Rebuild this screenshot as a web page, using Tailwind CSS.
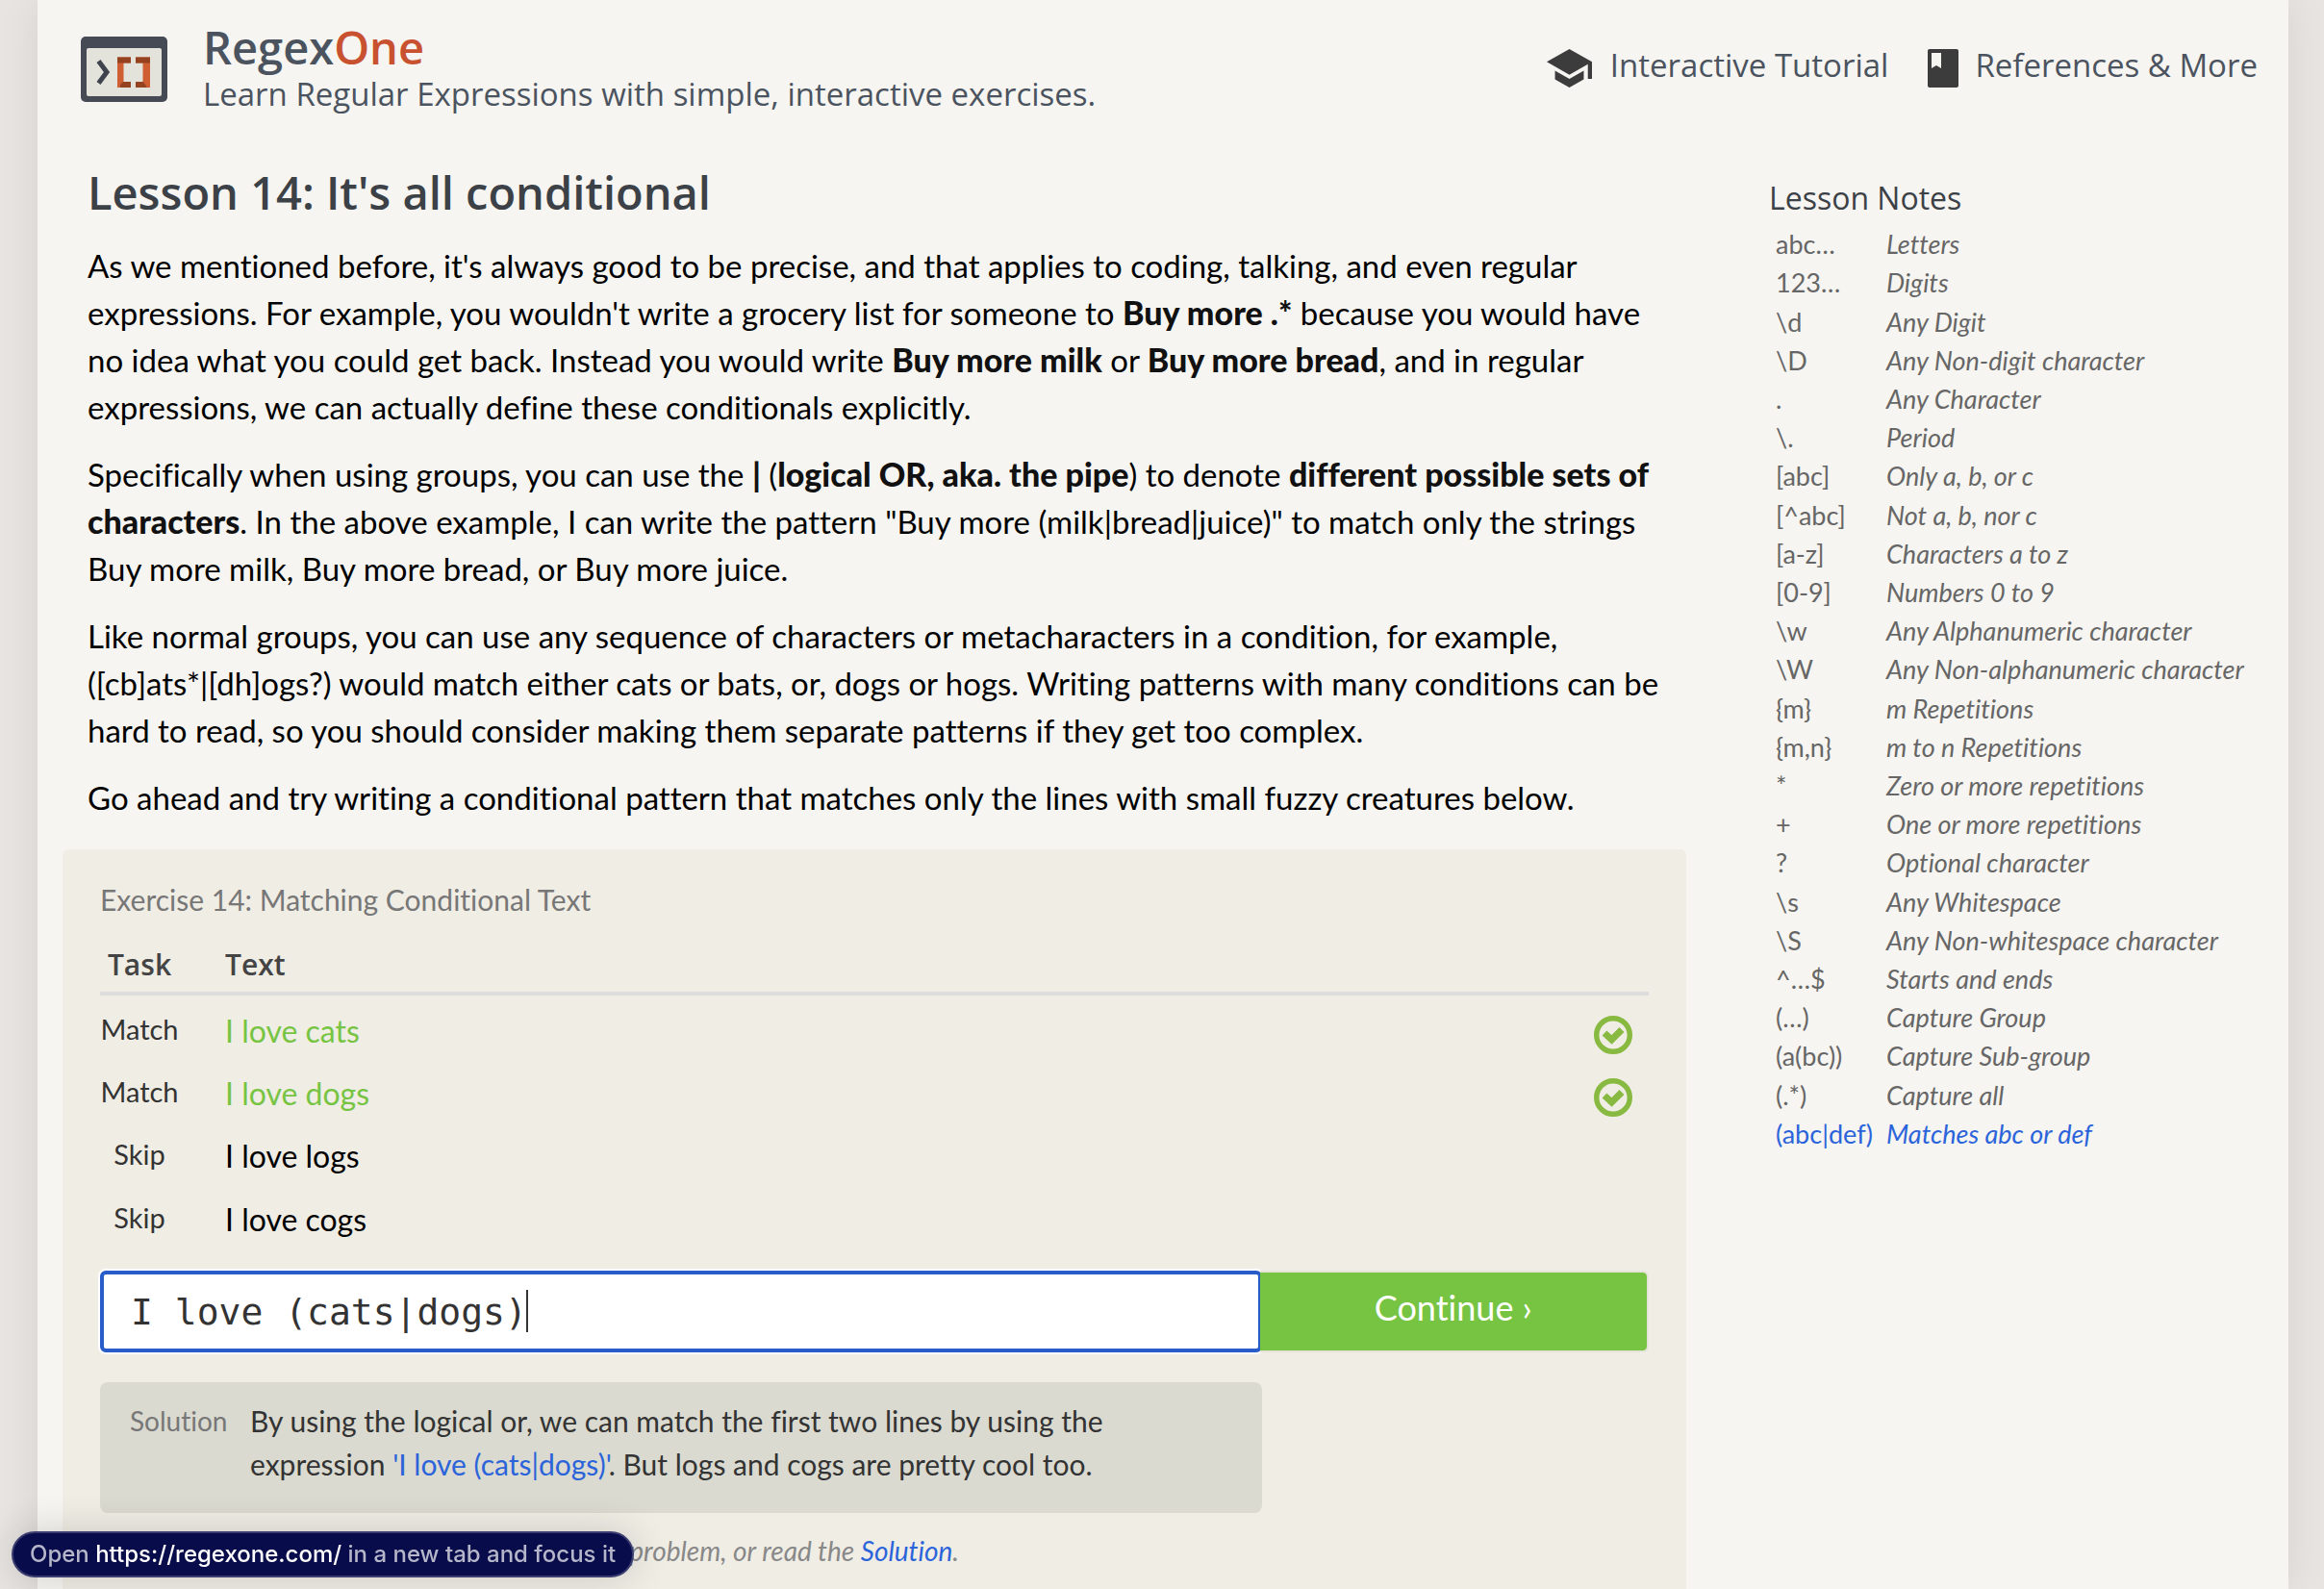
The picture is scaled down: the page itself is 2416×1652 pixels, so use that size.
<!DOCTYPE html>
<html lang="en">
<head>
<meta charset="utf-8">
<title>RegexOne - Lesson 14: It's all conditional</title>
<script src="https://cdn.jsdelivr.net/npm/@tailwindcss/browser@4"></script>
</head>
<body class="bg-[#e8e4e1] pl-[39px] pr-[37px] font-['Lato',sans-serif] text-black overflow-hidden [font-variant-ligatures:no-common-ligatures]">
<div class="flex min-h-screen flex-col bg-[#f6f5f1] pl-[26px] shadow-[0_0_40px_rgba(0,0,0,0.08)]">

  <header class="flex items-start pt-[27px] font-['Open_Sans',sans-serif] text-[#4b535f]">
    <svg class="ml-[19px] mt-[11px] h-[68px] w-[90px] shrink-0" viewBox="0 0 90 68" aria-hidden="true">
      <rect width="90" height="68" rx="5" fill="#454a55"/>
      <rect x="6" y="12" width="78" height="50" rx="2" fill="#e3e3db"/>
      <path d="M18.500 25.500L27 37L18.500 48.500" fill="none" stroke="#3e434e" stroke-width="5"/>
      <path d="M38 21.500H52V27.500H44.500V47H52V53H38Z" fill="#cf5f33"/>
      <path d="M72 21.500H57V27.500H64.500V47H57V53H72Z" fill="#cf5f33"/>
      <path d="M38 21.500H52V27.500H38ZM57 21.500H72V27.500H57ZM44 47H52V53H41V50ZM57 47H65L69 53H57Z" fill="#94421f"/>
    </svg>
    <div class="ml-[37px] flex-1">
      <a href="#" class="block text-[47px] leading-[45px] font-semibold">Regex<span class="text-[#c85130]">One</span></a>
      <p class="text-[33px] leading-[52px]">Learn Regular Expressions with simple, interactive exercises.</p>
    </div>
    <nav class="mt-4 mr-8 flex gap-[41px] text-[33px] leading-[50px]">
      <a href="#" class="flex gap-[19px]">
        <svg class="mt-2 h-10 w-[47px]" viewBox="1 3 22 18" preserveAspectRatio="none" fill="#3c3c3c" aria-hidden="true"><path d="M5 13.180v4L12 21l7-3.820v-4L12 17l-7-3.820zM12 3L1 9l11 6 9-4.910V17h2V9L12 3z"/></svg>
        Interactive Tutorial
      </a>
      <a href="#" class="flex gap-[17px]">
        <svg class="mt-2 h-10 w-8" viewBox="4 2 16 20" fill="#3c3c3c" aria-hidden="true"><path d="M19 2H5c-.6 0-1 .4-1 1v18c0 .6.400 1 1 1h14c.6 0 1-.4 1-1V3c0-.6-.4-1-1-1zM6 4h5v8l-2.500-1.500L6 12V4z"/></svg>
        References &amp; More
      </a>
    </nav>
  </header>

  <div class="grid flex-1 grid-cols-[minmax(0,1fr)_540px] gap-x-[86px] pt-11">
    <main class="flex flex-col">
      <article class="pl-[26px] text-[33px] leading-[49px]">
        <h1 class="mb-5 font-['Open_Sans',sans-serif] text-[47px] leading-[64px] font-semibold text-[#3c4147]">Lesson 14: It's all conditional</h1>
        <div class="flex flex-col gap-[21px]">
          <p>As we mentioned before, it's always good to be precise, and that applies to coding, talking, and even regular<br>expressions. For example, you wouldn't write a grocery list for someone to <strong class="text-[34px] leading-10 font-black text-[#111]">Buy more .*</strong> because you would have<br>no idea what you could get back. Instead you would write <strong class="text-[34px] leading-10 font-black text-[#111]">Buy more milk</strong> or <strong class="text-[34px] leading-10 font-black text-[#111]">Buy more bread</strong>, and in regular<br>expressions, we can actually define these conditionals explicitly.</p>
          <p>Specifically when using groups, you can use the <strong class="text-[34px] leading-10 font-black text-[#111]">|</strong> (<strong class="text-[34px] leading-10 font-black text-[#111]">logical OR, aka. the pipe</strong>) to denote <strong class="text-[34px] leading-10 font-black text-[#111]">different possible sets of<br>characters</strong>. In the above example, I can write the pattern "Buy more (milk|bread|juice)" to match only the strings<br>Buy more milk, Buy more bread, or Buy more juice.</p>
          <p>Like normal groups, you can use any sequence of characters or metacharacters in a condition, for example,<br>([cb]ats*|[dh]ogs?) would match either cats or bats, or, dogs or hogs. Writing patterns with many conditions can be<br>hard to read, so you should consider making them separate patterns if they get too complex.</p>
          <p>Go ahead and try writing a conditional pattern that matches only the lines with small fuzzy creatures below.</p>
        </div>
      </article>

      <section class="mt-[29px] flex-1 rounded-t-md bg-[#f0ede5] px-[39px] pt-[30px]">
        <h2 class="text-[30px] leading-[45px] text-[#777]">Exercise 14: Matching Conditional Text</h2>
        <table class="w-full border-collapse">
          <thead class="border-b-4 border-[#dcdcdc] font-['Open_Sans',sans-serif] text-[30px] leading-10 text-[#444]">
            <tr>
              <th class="w-[130px] pt-[25px] pr-12 pb-2 text-center font-semibold">Task</th>
              <th class="pt-[25px] pb-2 text-left font-semibold">Text</th>
              <th class="w-[57px]"></th>
            </tr>
          </thead>
          <tbody class="align-top leading-[57px]">
            <tr class="h-[65px]">
              <td class="pt-1.5 pr-12 text-center text-[29px] text-[#333]">Match</td>
              <td class="pt-2 text-[32px] text-[#77c443]">I love cats</td>
              <td class="pt-[21px]"><svg class="size-10" viewBox="0 0 40 40" fill="none" stroke="#88b940" role="img" aria-label="Matched"><circle cx="20" cy="20" r="17.300" stroke-width="5.400"/><path d="M11 18L18.500 25L29 14.500" stroke-width="7"/></svg></td>
            </tr>
            <tr class="h-[65px]">
              <td class="pt-1.5 pr-12 text-center text-[29px] text-[#333]">Match</td>
              <td class="pt-2 text-[32px] text-[#77c443]">I love dogs</td>
              <td class="pt-[21px]"><svg class="size-10" viewBox="0 0 40 40" fill="none" stroke="#88b940" role="img" aria-label="Matched"><circle cx="20" cy="20" r="17.300" stroke-width="5.400"/><path d="M11 18L18.500 25L29 14.500" stroke-width="7"/></svg></td>
            </tr>
            <tr class="h-[66px]">
              <td class="pt-1.5 pr-12 text-center text-[29px] text-[#333]">Skip</td>
              <td class="pt-2 text-[32px]">I love logs</td>
              <td></td>
            </tr>
            <tr class="h-[65px]">
              <td class="pt-1.5 pr-12 text-center text-[29px] text-[#333]">Skip</td>
              <td class="pt-2 text-[32px]">I love cogs</td>
              <td></td>
            </tr>
          </tbody>
        </table>

        <form class="mt-[25px] flex h-[85px]">
          <div class="relative w-3/4 shrink-0">
            <input type="text" aria-label="Your pattern" value="I love (cats|dogs)" class="h-full w-full rounded-md border-4 border-[#285dc9] bg-white pl-7 font-['DejaVu_Sans_Mono',monospace] text-[38px] text-[#333] shadow-[0_0_0_2px_#fff] outline-none">
            <span class="absolute top-5 left-[443px] h-11 w-0.5 bg-[#333]"></span>
          </div>
          <button type="button" class="relative -ml-0.5 flex-1 rounded-r-md border-2 border-l-0 border-[#e6e3db] bg-[#77c443] bg-clip-padding pb-[10px] text-[36px] text-white">Continue ›</button>
        </form>

        <div class="mt-[31px] flex w-3/4 rounded-lg bg-[#dadad0] pt-[18px] pb-7 pl-[31px] text-[30px] leading-[45px] text-[#333]">
          <span class="w-[125px] shrink-0 text-[28px] text-[#777]">Solution</span>
          <p>By using the logical or, we can match the first two lines by using the<br>expression <span class="text-[#2b64da]">'I love (cats|dogs)'</span>. But logs and cogs are pretty cool too.</p>
        </div>
        <p class="mt-[18px] text-[28px] leading-[42px] text-[#888] italic">Solve the above task to continue on to the next problem, or read the <a href="#" class="text-[#2b64da]">Solution</a>.</p>
      </section>
    </main>

    <aside class="pt-[14px] text-[#666]">
      <h2 class="mb-1 font-['Open_Sans',sans-serif] text-[32px] leading-[48px] text-[#3c4147]">Lesson Notes</h2>
      <table class="ml-[7px] h-[965px] text-left text-[27px] leading-10">
        <tbody id="notes"></tbody>
      </table>
    </aside>
  </div>
</div>

<div class="fixed bottom-3 left-3 h-12 rounded-full border-2 border-[#3b3d70] bg-[#090c4b] px-[17px] font-['Inter',sans-serif] text-2xl leading-[44px] font-medium whitespace-nowrap text-[#b5b6c9] shadow-[0_0_40px_rgba(0,0,0,0.16)]">Open <span class="text-white">https://regexone.com/</span> in a new tab and focus it</div>

<script>
const notes = [
  ["abc…", "Letters"], ["123…", "Digits"], ["\\d", "Any Digit"], ["\\D", "Any Non-digit character"],
  [".", "Any Character"], ["\\.", "Period"], ["[abc]", "Only a, b, or c"], ["[^abc]", "Not a, b, nor c"],
  ["[a-z]", "Characters a to z"], ["[0-9]", "Numbers 0 to 9"], ["\\w", "Any Alphanumeric character"],
  ["\\W", "Any Non-alphanumeric character"], ["{m}", "m Repetitions"], ["{m,n}", "m to n Repetitions"],
  ["*", "Zero or more repetitions"], ["+", "One or more repetitions"], ["?", "Optional character"],
  ["\\s", "Any Whitespace"], ["\\S", "Any Non-whitespace character"], ["^…$", "Starts and ends"],
  ["(…)", "Capture Group"], ["(a(bc))", "Capture Sub-group"], ["(.*)", "Capture all"], ["(abc|def)", "Matches abc or def"]
];
document.getElementById("notes").innerHTML = notes.map(([code, text], i) =>
  `<tr class="${i === notes.length - 1 ? "text-[#2b64da]" : ""}"><th scope="row" class="w-[115px] min-w-[115px] font-normal">${code}</th><td class="italic whitespace-nowrap">${text}</td></tr>`
).join("");
</script>
</body>
</html>
